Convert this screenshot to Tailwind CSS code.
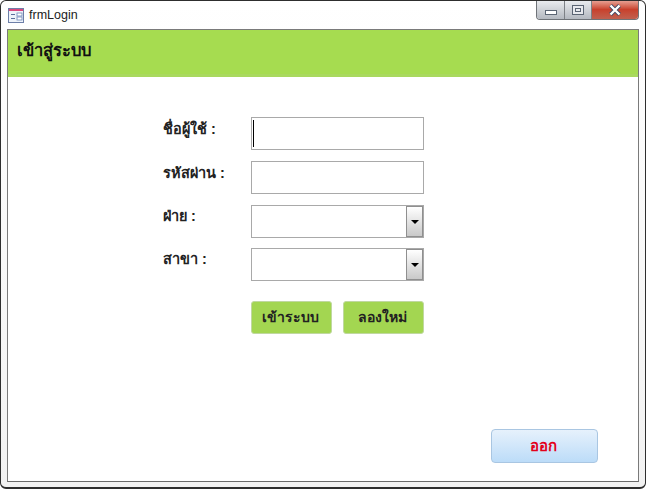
<!DOCTYPE html>
<html lang="th">

<head>
    <meta charset="UTF-8">
    <title>frmLogin</title>
    <script src="https://cdn.jsdelivr.net/npm/@tailwindcss/browser@4"></script>
</head>

<body class="bg-white w-[646px] h-[489px] overflow-hidden font-['Liberation_Sans',sans-serif]">
    <div class="w-[646px] h-[489px] flex flex-col border border-[#2e2e2e] border-b-2 rounded-[6px] pl-[6px] pr-[6px] pb-[5px] overflow-hidden bg-gradient-to-b from-white to-[#f2f2f2]">
        <!-- title bar -->
        <div class="h-[28px] flex items-start shrink-0">
            <svg class="mt-[7px] ml-[1px]" width="16" height="15" viewBox="0 0 16 15">
                <rect x="0.5" y="0.5" width="15" height="14" fill="#eef3fa" stroke="#6d7fa8" />
                <rect x="1" y="1" width="14" height="2" fill="#d9487f" />
                <path d="M3 6.5h4M3 10.5h4" stroke="#5a6f9c" />
                <rect x="9" y="5" width="5" height="3" fill="#fff" stroke="#6d86b8" stroke-width="0.8" />
                <rect x="9" y="9" width="5" height="3" fill="#fff" stroke="#6d86b8" stroke-width="0.8" />
            </svg>
            <span class="ml-[5px] mt-[7px] text-[12.5px] leading-[15px] text-[#222]">frmLogin</span>
            <!-- window buttons -->
            <div class="ml-auto mt-[-1px] flex h-[20px] border border-t-0 border-[#6f7378] rounded-b-[4px] overflow-hidden">
                <div class="w-[28px] flex items-center justify-center bg-gradient-to-b from-[#eceef1] to-[#b4b9c0] border-r border-[#7d8186]">
                    <div class="w-[12px] h-[5px] mt-[5px] border border-[#5b6573] bg-white"></div>
                </div>
                <div class="w-[27px] flex items-center justify-center bg-gradient-to-b from-[#eceef1] to-[#b4b9c0] border-r border-[#7d8186]">
                    <div class="w-[12px] h-[10px] border border-[#5b6573] bg-[#e8eaee] flex items-center justify-center">
                        <div class="w-[6px] h-[4px] border border-[#5b6573]"></div>
                    </div>
                </div>
                <div class="w-[46px] flex items-center justify-center bg-gradient-to-b from-[#e8a89c] via-[#c8402c] to-[#c0604f]">
                    <svg width="14" height="12" viewBox="0 0 14 12">
                        <path d="M2.5 1.5 L11.5 10.5 M11.5 1.5 L2.5 10.5" stroke="#3d4a66" stroke-width="4" />
                        <path d="M2.5 1.5 L11.5 10.5 M11.5 1.5 L2.5 10.5" stroke="#fff" stroke-width="2.4" />
                    </svg>
                </div>
            </div>
        </div>

        <!-- form body -->
        <div class="flex-1 flex flex-col bg-white border border-[#7a7a7a] border-b-[#6a6a6a]">
            <div class="h-[47px] shrink-0 bg-[#a6dc50] border-b-[3px] border-[#a9d95e] pl-[9px] pt-[6px] text-[16.5px] leading-[28px] font-bold text-[#111]">เข้าสู่ระบบ</div>

            <div class="flex-1 relative">
                <div class="ml-[155px] mt-[40px] w-[262px] flex flex-col">
                    <div class="flex h-[33px]">
                        <label class="w-[88px] pt-[1px] text-[14.5px] leading-[22px] font-bold text-[#222]">ชื่อผู้ใช้ :</label>
                        <div class="w-[173px] border border-[#a9a9a9] bg-white flex items-center pl-[1px]">
                            <div class="w-px h-[27px] bg-black"></div>
                        </div>
                    </div>
                    <div class="flex h-[33px] mt-[11px]">
                        <label class="w-[88px] pt-px text-[14.5px] leading-[22px] font-bold text-[#222]">รหัสผ่าน :</label>
                        <div class="w-[173px] border border-[#a9a9a9] bg-white"></div>
                    </div>
                    <div class="flex h-[33px] mt-[11px]">
                        <label class="w-[88px] text-[14.5px] leading-[22px] font-bold text-[#222]">ฝ่าย :</label>
                        <div class="w-[173px] border border-[#a9a9a9] bg-white flex justify-end">
                            <div class="w-[17px] bg-gradient-to-b from-white to-[#c9c9c9] border border-[#8f8f8f] flex items-center justify-center">
                                <div class="w-0 h-0 border-l-[4px] border-r-[4px] border-t-[4px] border-l-transparent border-r-transparent border-t-black"></div>
                            </div>
                        </div>
                    </div>
                    <div class="flex h-[33px] mt-[10px]">
                        <label class="w-[88px] text-[14.5px] leading-[22px] font-bold text-[#222]">สาขา :</label>
                        <div class="w-[173px] border border-[#a9a9a9] bg-white flex justify-end">
                            <div class="w-[17px] bg-gradient-to-b from-white to-[#c9c9c9] border border-[#8f8f8f] flex items-center justify-center">
                                <div class="w-0 h-0 border-l-[4px] border-r-[4px] border-t-[4px] border-l-transparent border-r-transparent border-t-black"></div>
                            </div>
                        </div>
                    </div>
                    <div class="flex gap-[11px] ml-[88px] mt-[20px]">
                        <button class="w-[81px] h-[33px] pr-[2px] rounded-[3px] bg-[#a3d651] border border-[#c0d8a0] text-[14px] font-bold text-[#222]">เข้าระบบ</button>
                        <button class="w-[81px] h-[33px] pr-[3px] rounded-[3px] bg-[#a3d651] border border-[#c0d8a0] text-[14px] font-bold text-[#222]">ลองใหม่</button>
                    </div>
                </div>
                <div class="absolute right-[40px] bottom-[18px]">
                    <button class="w-[107px] h-[34px] pr-[3px] rounded-[4px] bg-gradient-to-b from-[#e6f1fc] to-[#bcdcf8] border border-[#a9c6e2] text-[15px] font-bold text-[#e3001b]">ออก</button>
                </div>
            </div>
        </div>
    </div>
</body>

</html>
